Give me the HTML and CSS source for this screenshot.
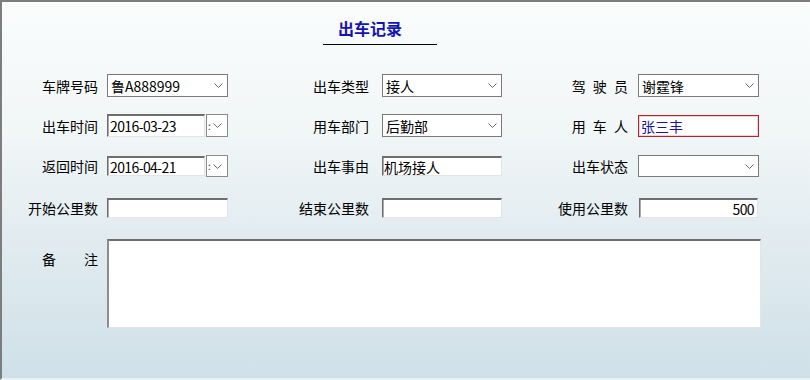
FILE: index.html
```html
<!DOCTYPE html>
<html lang="zh-CN">
<head>
<meta charset="utf-8">
<title>出车记录</title>
<link rel="stylesheet" href="styles.css">
</head>
<body>
<div class="window">
  <div class="header">
    <div class="title">出车记录</div>
  </div>
  <div class="form">
    <div class="row row1">
      <div class="label">车牌号码</div>
      <div class="field select"><span>鲁A888999</span><svg class="chev" width="9" height="5" viewBox="0 0 9 5"><polyline points="0.5,0.5 4.5,4.5 8.5,0.5" fill="none" stroke="#6a6a6a" stroke-width="1"/></svg></div>
      <div class="label">出车类型</div>
      <div class="field select"><span>接人</span><svg class="chev" width="9" height="5" viewBox="0 0 9 5"><polyline points="0.5,0.5 4.5,4.5 8.5,0.5" fill="none" stroke="#6a6a6a" stroke-width="1"/></svg></div>
      <div class="label spaced">驾 驶 员</div>
      <div class="field select"><span>谢霆锋</span><svg class="chev" width="9" height="5" viewBox="0 0 9 5"><polyline points="0.5,0.5 4.5,4.5 8.5,0.5" fill="none" stroke="#6a6a6a" stroke-width="1"/></svg></div>
    </div>
    <div class="row row2">
      <div class="label">出车时间</div>
      <div class="field date">
        <div class="inset date-input"><span class="num">2016-03-23</span></div>
        <div class="date-btn"><span class="colon">:</span><svg class="chev" width="9" height="5" viewBox="0 0 9 5"><polyline points="0.5,0.5 4.5,4.5 8.5,0.5" fill="none" stroke="#6a6a6a" stroke-width="1"/></svg></div>
      </div>
      <div class="label">用车部门</div>
      <div class="field select"><span>后勤部</span><svg class="chev" width="9" height="5" viewBox="0 0 9 5"><polyline points="0.5,0.5 4.5,4.5 8.5,0.5" fill="none" stroke="#6a6a6a" stroke-width="1"/></svg></div>
      <div class="label spaced">用 车 人</div>
      <div class="field text-red"><span>张三丰</span></div>
    </div>
    <div class="row row3">
      <div class="label">返回时间</div>
      <div class="field date">
        <div class="inset date-input"><span class="num">2016-04-21</span></div>
        <div class="date-btn"><span class="colon">:</span><svg class="chev" width="9" height="5" viewBox="0 0 9 5"><polyline points="0.5,0.5 4.5,4.5 8.5,0.5" fill="none" stroke="#6a6a6a" stroke-width="1"/></svg></div>
      </div>
      <div class="label">出车事由</div>
      <div class="field inset text-in"><span>机场接人</span></div>
      <div class="label">出车状态</div>
      <div class="field select sel-tall"><span></span><svg class="chev" width="9" height="5" viewBox="0 0 9 5"><polyline points="0.5,0.5 4.5,4.5 8.5,0.5" fill="none" stroke="#6a6a6a" stroke-width="1"/></svg></div>
    </div>
    <div class="row row4">
      <div class="label">开始公里数</div>
      <div class="field inset num-in"></div>
      <div class="label">结束公里数</div>
      <div class="field inset num-in"></div>
      <div class="label">使用公里数</div>
      <div class="field inset num-in right"><span class="num">500</span></div>
    </div>
    <div class="row row5">
      <div class="label remark-label"><span>备</span><span>注</span></div>
      <div class="inset memo"></div>
    </div>
  </div>
</div>
</body>
</html>
```

FILE: styles.css
```css
html, body {
  margin: 0;
  padding: 0;
}

body {
  font-family: "Noto Sans CJK SC", "Noto Sans", sans-serif;
  font-size: 14px;
  color: #000;
}

.window {
  width: 810px;
  height: 380px;
  box-sizing: border-box;
  border-left: 2px solid #7d7d7d;
  border-top: 2px solid #7d7d7d;
  border-bottom: 2px solid #e9f1f4;
  background: linear-gradient(to bottom, #fafcfc 0%, #f1f6f7 35%, #e2ecf0 62%, #cfe0e8 100%);
}

.header {
  padding-top: 16px;
}

.title {
  margin-left: 321px;
  width: 114px;
  box-sizing: border-box;
  padding-left: 15px;
  padding-bottom: 6px;
  border-bottom: 1px solid #000;
  font-size: 16px;
  line-height: 20px;
  font-weight: bold;
  color: #1414b4;
}

.form {
  padding-top: 29px;
}

.row {
  display: grid;
  grid-template-columns: 105px 121px 154px 120px 136px 121px;
  align-items: center;
}

.row1 { height: 23px; }
.row2 { height: 23px; margin-top: 17px; }
.row3 { height: 22px; margin-top: 18px; }
.row4 { height: 20px; margin-top: 21px; }
.row5 { margin-top: 21px; align-items: start; }

.label {
  text-align: right;
  line-height: 16px;
  white-space: pre;
}

.row .label:nth-child(1) { padding-right: 9px; }
.row .label:nth-child(3) { padding-right: 13px; }
.row .label:nth-child(5) { padding-right: 10px; }

.spaced {
  letter-spacing: 2px;
  margin-right: -2px;
}

.field {
  box-sizing: border-box;
  background: #fff;
  line-height: 16px;
  white-space: nowrap;
}

.select {
  height: 23px;
  border: 1px solid #7a7a7a;
  display: flex;
  align-items: center;
  justify-content: space-between;
  padding: 0 4px 0 3px;
}

.sel-tall {
  height: 22px;
}

.chev {
  display: block;
  flex: none;
}

.inset {
  border-top: 2px solid #6e6e6e;
  border-left: 1px solid #6e6e6e;
  border-right: 1px solid #e4e4e4;
  border-bottom: 1px solid #e4e4e4;
  box-shadow: inset 1px 0 0 #a9a9a9;
  background: #fff;
}

.date {
  background: transparent;
  display: flex;
  gap: 1px;
  height: 23px;
}

.date-input {
  width: 98px;
  box-sizing: border-box;
  display: flex;
  align-items: center;
  padding-left: 2px;
}

.row3 .date {
  height: 20px;
}

.num {
  letter-spacing: -0.6px;
}

.date-btn {
  width: 22px;
  box-sizing: border-box;
  border: 1px solid #8a8a8a;
  background: #fff;
  display: flex;
  align-items: center;
  padding-left: 1px;
  gap: 2px;
}

.row3 .date-btn {
  height: 22px;
  margin-top: -1px;
}

.colon {
  font-size: 10px;
  line-height: 10px;
  color: #333;
}

.text-red {
  height: 22px;
  border: 1px solid #b3242c;
  box-shadow: inset 0 0 0 1px #f3d2d4;
  color: #16169c;
  display: flex;
  align-items: center;
  padding-left: 2px;
}

.text-in {
  height: 20px;
  display: flex;
  align-items: center;
  padding-left: 1px;
}

.num-in {
  height: 20px;
  display: flex;
  align-items: center;
  padding: 0 3px;
}

.row4 .num-in:nth-child(6) {
  margin-left: 1px;
  width: 119px;
}

.right {
  justify-content: flex-end;
}

.remark-label {
  display: flex;
  justify-content: space-between;
  margin-left: 40px;
  padding-top: 12px;
}

.memo {
  grid-column: 2 / 7;
  width: 654px;
  height: 89px;
  box-sizing: border-box;
  border-top: 2px solid #6e6e6e;
  border-left: 2px solid #8c8c8c;
  box-shadow: none;
}
```
